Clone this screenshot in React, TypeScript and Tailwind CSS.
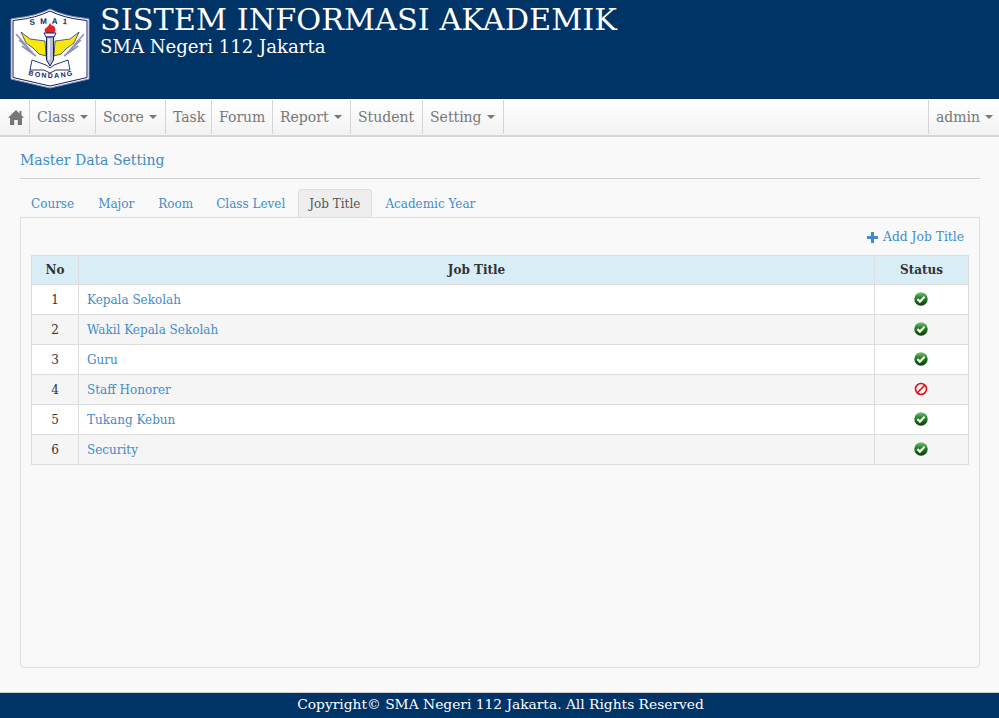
const menu = [
	{ label: "Class", caret: true, width: "w-[66px]" },
	{ label: "Score", caret: true, width: "w-[70px]" },
	{ label: "Task", width: "w-[46px]" },
	{ label: "Forum", width: "w-[61px]" },
	{ label: "Report", caret: true, width: "w-[78px]" },
	{ label: "Student", width: "w-[72px]" },
	{ label: "Setting", caret: true, width: "w-[81px]" },
];

const tabs = [
	{ label: "Course", margin: "mr-[2px]" },
	{ label: "Major", margin: "mr-[2px]" },
	{ label: "Room", margin: "mr-[1px]" },
	{ label: "Class Level", margin: "mr-[2px]" },
	{ label: "Job Title", margin: "mr-[2px]" },
	{ label: "Academic Year", margin: "mr-[2px]" },
];

const jobTitles = [
	{ no: 1, name: "Kepala Sekolah", active: true },
	{ no: 2, name: "Wakil Kepala Sekolah", active: true },
	{ no: 3, name: "Guru", active: true },
	{ no: 4, name: "Staff Honorer", active: false },
	{ no: 5, name: "Tukang Kebun", active: true },
	{ no: 6, name: "Security", active: true },
];

function Caret() {
	return <span className="ml-[5px] inline-block h-0 w-0 align-middle border-x-[4px] border-t-[4px] border-x-transparent border-t-[#777]" />;
}

function HomeIcon() {
	return (
		<svg width="16" height="15" viewBox="0 0 16 15" aria-hidden="true">
			<path d="M8 0 L11.5 3.4 L11.5 1 L13.5 1 L13.5 5.3 L16 7.8 L14 7.8 L14 15 L9.8 15 L9.8 10 L6.2 10 L6.2 15 L2 15 L2 7.8 L0 7.8 Z" fill="#777" />
		</svg>
	);
}

function PlusIcon() {
	return (
		<svg width="11" height="11" viewBox="0 0 11 11" aria-hidden="true">
			<path d="M4 0 H7 V4 H11 V7 H7 V11 H4 V7 H0 V4 H4 Z" fill="#428bca" />
		</svg>
	);
}

// school crest, coordinates are page pixels
function Logo() {
	return (
		<svg width="80" height="81" viewBox="10 8 80 81" aria-hidden="true">
			<path d="M11 19 L17 18 Q36 16 50 9 Q64 16 83 18 L89 19 L89 79 L50 88 L11 79 Z" fill="#fff" stroke="#8d93b8" strokeWidth="1" />
			<path d="M13 20.5 L17 20 Q36 18 50 11 Q64 18 83 20 L87 20.5 L87 77.5 L50 86 L13 77.5 Z" fill="#fff" stroke="#141f66" strokeWidth="1" />

			<path id="crest-top" d="M30 25 Q50 22.5 74 25" fill="none" />
			<text fontSize="8" fontWeight="700" fill="#141f66" fontFamily="Liberation Sans, sans-serif" letterSpacing="5">
				<textPath href="#crest-top">SMA1</textPath>
			</text>

			<path d="M16 34 L30 50 M19 40 L33 53 M22 46 L36 56" stroke="#8d93b8" strokeWidth="1.6" />
			<path d="M84 34 L70 50 M81 40 L67 53 M78 46 L64 56" stroke="#8d93b8" strokeWidth="1.6" />
			<path d="M21 32 L30 39 L45 41 L46 56 L39 54 L33 48 L26 43 Z" fill="#f8e60f" stroke="#141f66" strokeWidth="0.7" />
			<path d="M79 32 L70 39 L55 41 L54 56 L61 54 L67 48 L74 43 Z" fill="#f8e60f" stroke="#141f66" strokeWidth="0.7" />

			<path d="M50 23 Q51 26 54 26 Q57 30 54 33 L46 33 Q43 30 46 28 Q48 27 50 23 Z" fill="#e3222c" />
			<path d="M44 33 L56 33 L54 37 L46 37 Z" fill="#fff" stroke="#141f66" strokeWidth="1" />
			<path d="M46.5 37 L53.5 37 L53.5 60 L50 66 L46.5 60 Z" fill="#b8bdd6" stroke="#141f66" strokeWidth="1" />
			<path d="M49 39 L49 60" stroke="#fff" strokeWidth="1.4" />

			<path d="M32 60 L46 65 L50 68 L54 65 L68 60 L70 70 L56 70 L50 73 L44 70 L30 70 Z" fill="#fff" stroke="#141f66" strokeWidth="0.9" />

			<path id="crest-bottom" d="M28 75 Q50 81 75 75" fill="none" />
			<text fontSize="7" fontWeight="700" fill="#141f66" fontFamily="Liberation Sans, sans-serif" letterSpacing="1.5">
				<textPath href="#crest-bottom">BONDANG</textPath>
			</text>
		</svg>
	);
}

function StatusIcon({ active }: { active: boolean }) {
	if (!active) {
		return (
			<svg width="14" height="14" viewBox="0 0 14 14" className="mx-auto -mt-[2px] block" aria-hidden="true">
				<circle cx="7" cy="7" r="5.5" fill="none" stroke="#d8101c" strokeWidth="1.6" />
				<path d="M3.3 10.7 L10.7 3.3" stroke="#d8101c" strokeWidth="1.6" />
			</svg>
		);
	}
	return (
		<svg width="14" height="14" viewBox="0 0 14 14" className="mx-auto -mt-[2px] block" aria-hidden="true">
			<defs>
				<linearGradient id="ok" x1="0" y1="0" x2="0" y2="1">
					<stop offset="0" stopColor="#7fbf7f" />
					<stop offset="0.45" stopColor="#1c7c1c" />
					<stop offset="1" stopColor="#0b3d0b" />
				</linearGradient>
			</defs>
			<circle cx="7" cy="7" r="6.7" fill="url(#ok)" />
			<path d="M3.4 7 L5.9 9.6 L10.6 4.8" fill="none" stroke="#fff" strokeWidth="2.2" />
		</svg>
	);
}

export default function App() {
	return (
		<div className="flex min-h-[718px] flex-col bg-[#f9f9f9] font-['DejaVu_Serif',serif] text-[14px] text-[#333]">
			<header className="flex h-[99px] bg-[#003366] pl-[10px] pt-[8px] text-white">
				<Logo />
				<div className="-mt-[5px] ml-[10px]">
					<h1 className="text-[30.35px] leading-[34px] font-normal">SISTEM INFORMASI AKADEMIK</h1>
					<p className="text-[18.1px] leading-[20px]">SMA Negeri 112 Jakarta</p>
				</div>
			</header>

			<nav className="flex h-[38px] border-b-2 border-[#d5d5d5] bg-gradient-to-b from-white to-[#f2f2f2] py-px text-[#777]">
				<a className="flex w-[30px] items-center justify-center border-r border-[#d5d5d5] pl-[2px]">
					<HomeIcon />
				</a>
				{menu.map((item) => (
					<a key={item.label} className={`flex items-center border-r border-[#d5d5d5] pl-[7px] ${item.width}`}>
						{item.label}
						{item.caret ? <Caret /> : null}
					</a>
				))}
				<a className="ml-auto flex w-[71px] items-center border-l border-[#d5d5d5] pl-[7px]">
					admin
					<Caret />
				</a>
			</nav>

			<main className="flex flex-1 flex-col pb-[24px] pl-[20px] pr-[19px] pt-[13px]">
				<div className="h-[29px] border-b border-[#cfcfcf] leading-[20px] text-[#428bca]">Master Data Setting</div>

				<ul className="mt-[10px] flex h-[28px] text-[12px]">
					{tabs.map((tab) =>
						tab.label === "Job Title" ? (
							<li key={tab.label} className={`relative z-10 h-[28px] rounded-t-[4px] border border-b-0 border-[#ddd] bg-[#eee] pl-[10px] pr-[11px] leading-[28px] text-[#555] ${tab.margin}`}>
								{tab.label}
							</li>
						) : (
							<li key={tab.label} className={`h-[28px] border border-b-0 border-transparent px-[10px] leading-[28px] text-[#428bca] ${tab.margin}`}>
								{tab.label}
							</li>
						),
					)}
				</ul>

				<section className="flex-1 rounded-b-[4px] border border-[#ddd] px-[10px] pt-[10px]">
					<div className="flex h-[27px] items-start justify-end pr-[5px] text-[12.3px] leading-[18px] text-[#428bca]">
						<span className="flex items-center gap-[5px]">
							<PlusIcon />
							Add Job Title
						</span>
					</div>
					<table className="w-full table-fixed border-collapse text-[12px]">
						<thead>
							<tr className="h-[29px] bg-[#d9edf7]">
								<th className="w-[47px] border border-[#ddd] font-bold">No</th>
								<th className="border border-[#ddd] font-bold">Job Title</th>
								<th className="w-[94px] border border-[#ddd] font-bold">Status</th>
							</tr>
						</thead>
						<tbody>
							{jobTitles.map((job) => (
								<tr key={job.no} className="h-[30px] odd:bg-white even:bg-[#f5f5f5]">
									<td className="border border-[#ddd] text-center">{job.no}</td>
									<td className="border border-[#ddd] px-[8px] text-[#428bca]">{job.name}</td>
									<td className="border border-[#ddd] pr-[2px]">
										<StatusIcon active={job.active} />
									</td>
								</tr>
							))}
						</tbody>
					</table>
				</section>
			</main>

			<footer className="h-[26px] border-t border-[#cfcfcf] bg-[#003366] pl-[2px] text-center text-[13.8px] leading-[23px] text-white">
				Copyright© SMA Negeri 112 Jakarta. All Rights Reserved
			</footer>
		</div>
	);
}
